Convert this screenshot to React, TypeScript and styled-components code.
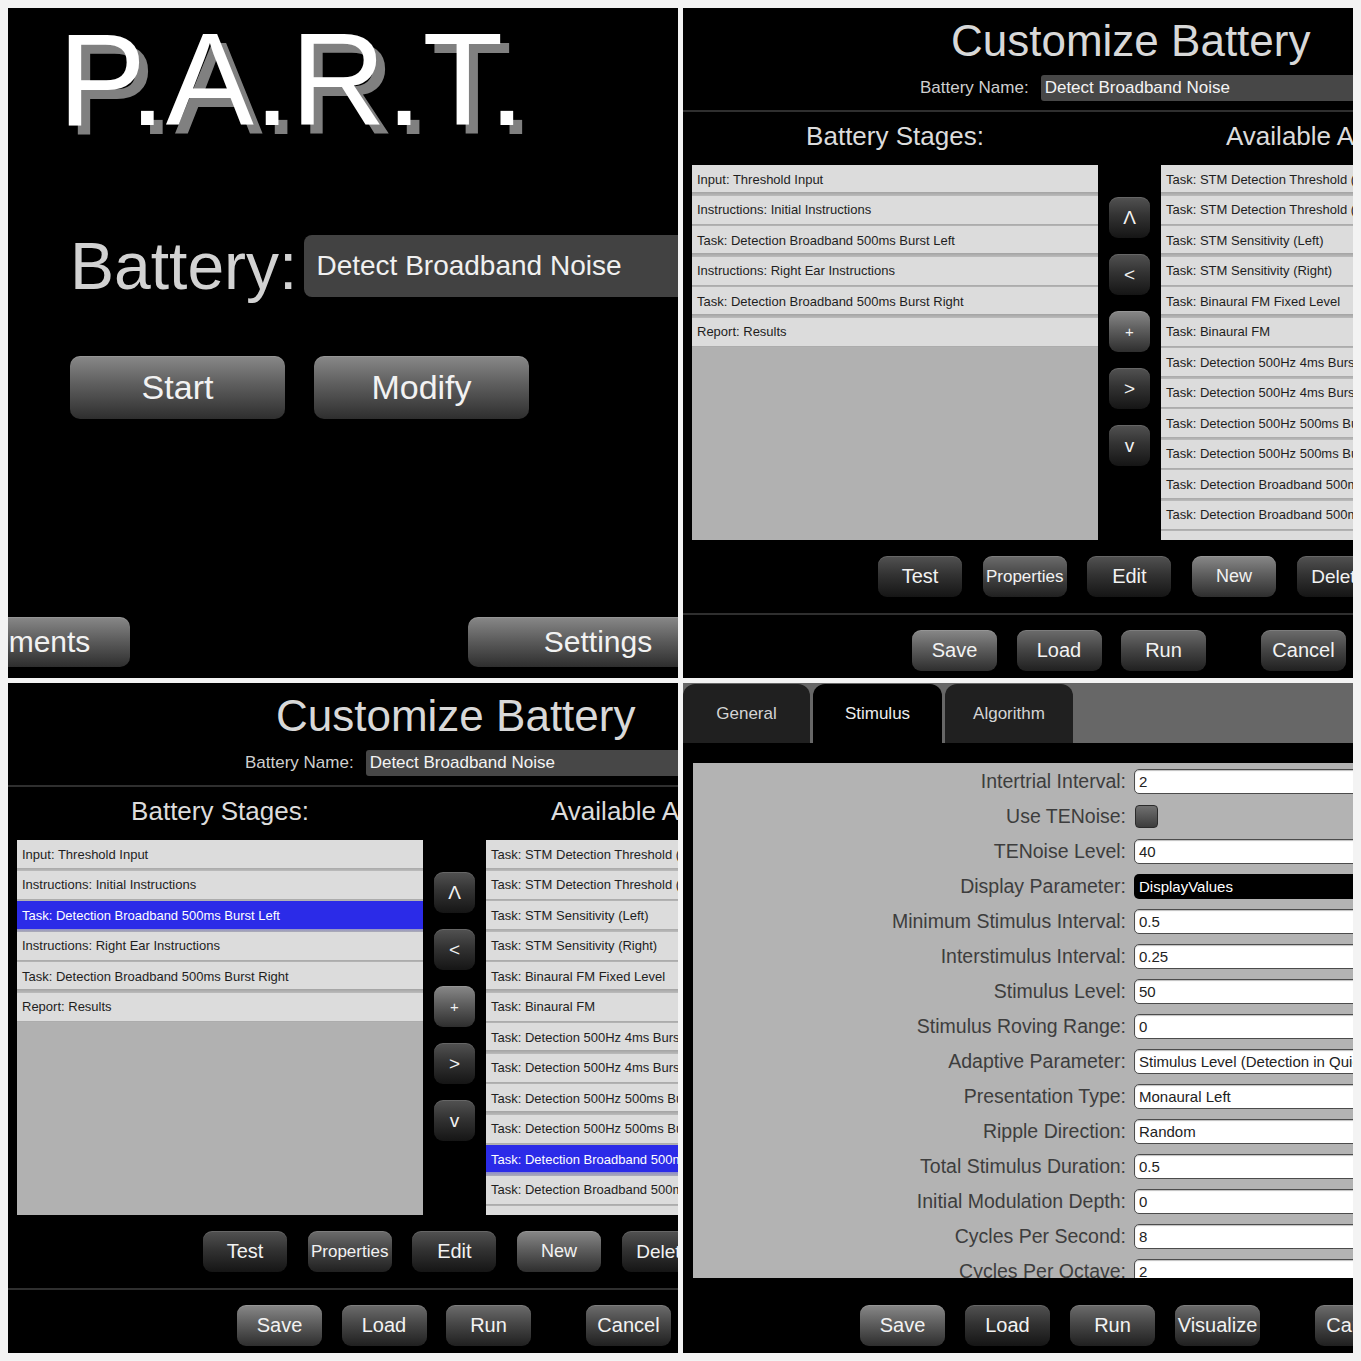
import React from "react";
import styled, { createGlobalStyle } from "styled-components";

const GlobalStyle = createGlobalStyle`
  html, body { margin: 0; padding: 0; background: #f3f3f3; }
  body { font-family: "Liberation Sans", Arial, Helvetica, sans-serif; }
  * { box-sizing: border-box; }
`;

type Tone = "light" | "mid" | "dark";

const toneBg: Record<Tone, string> = {
  light: "linear-gradient(to bottom, #888 0%, #5e5e5e 45%, #2e2e2e 100%)",
  mid: "linear-gradient(to bottom, #6c6c6c 0%, #474747 45%, #202020 100%)",
  dark: "linear-gradient(to bottom, #525252 0%, #333 45%, #151515 100%)",
};

const Collage = styled.main`
  display: grid;
  grid-template-columns: 670px 670px;
  grid-template-rows: 670px 670px;
  gap: 5px;
  padding: 8px;
  width: 1361px;
  height: 1361px;
  background: #f3f3f3;
`;

const Screen = styled.section`
  overflow: hidden;
  background: #000;
  display: flex;
  flex-direction: column;
  min-width: 0;
`;

const GlossButton = styled.button<{ $tone: Tone; $w: number; $h: number; $fs: number; $r: number }>`
  flex: none;
  width: ${(p) => p.$w}px;
  height: ${(p) => p.$h}px;
  border: none;
  border-radius: ${(p) => p.$r}px;
  background: ${(p) => toneBg[p.$tone]};
  box-shadow: inset 0 1px 0 rgba(255, 255, 255, 0.12);
  color: #f2f2f2;
  font-family: inherit;
  font-size: ${(p) => p.$fs}px;
  padding: 0;
  display: flex;
  align-items: center;
  justify-content: center;
  white-space: nowrap;
  overflow: hidden;
`;

/* ---------- Home screen ---------- */

const Logo = styled.h1`
  margin: 1px 0 0 50px;
  padding-right: 12px;
  font-size: 132px;
  line-height: 142px;
  font-weight: normal;
  letter-spacing: 0;
  color: #fff;
  text-shadow: 9px 9px 0 #808080;
  white-space: nowrap;
  align-self: flex-start;
`;

const BatteryRow = styled.div`
  display: flex;
  align-items: center;
  gap: 7px;
  margin: 82px 0 0 62px;
`;

const BatteryLabel = styled.span`
  font-size: 66px;
  line-height: 66px;
  color: #d2d2d2;
  white-space: nowrap;
`;

const BatteryField = styled.div`
  flex: none;
  width: 420px;
  height: 62px;
  border-radius: 8px;
  background: #424242;
  color: #f0f0f0;
  font-size: 28px;
  display: flex;
  align-items: center;
  padding-left: 12px;
  white-space: nowrap;
`;

const HomeButtons = styled.div`
  display: flex;
  gap: 29px;
  margin: 57px 0 0 62px;
`;

const HomeFooter = styled.div`
  margin: auto -50px 11px -124px;
  display: flex;
  justify-content: space-between;
`;

const HomeScreen = () => (
  <Screen>
    <Logo>P.A.R.T.</Logo>
    <BatteryRow>
      <BatteryLabel>Battery:</BatteryLabel>
      <BatteryField>Detect Broadband Noise</BatteryField>
    </BatteryRow>
    <HomeButtons>
      <GlossButton $tone="light" $w={215} $h={63} $fs={34} $r={10}>Start</GlossButton>
      <GlossButton $tone="light" $w={215} $h={63} $fs={34} $r={10}>Modify</GlossButton>
    </HomeButtons>
    <HomeFooter>
      <GlossButton $tone="light" $w={246} $h={50} $fs={30} $r={10}>Experiments</GlossButton>
      <GlossButton $tone="light" $w={260} $h={50} $fs={30} $r={10}>Settings</GlossButton>
    </HomeFooter>
  </Screen>
);

/* ---------- Customize battery screen ---------- */

const Title = styled.h2`
  margin: 11px 0 0 268px;
  font-size: 44px;
  line-height: 44px;
  font-weight: normal;
  color: #d8d8d8;
  white-space: nowrap;
`;

const NameRow = styled.div`
  display: flex;
  align-items: center;
  gap: 12px;
  margin: 12px 0 0 237px;
  height: 26px;
`;

const NameLabel = styled.span`
  font-size: 17px;
  color: #cfcfcf;
  white-space: nowrap;
`;

const NameField = styled.div`
  flex: none;
  width: 420px;
  height: 26px;
  border-radius: 3px;
  background: #474747;
  color: #f4f4f4;
  font-size: 17px;
  padding-left: 4px;
  display: flex;
  align-items: center;
  white-space: nowrap;
`;

const Divider = styled.hr<{ $top: number }>`
  margin: ${(p) => p.$top}px 0 0;
  border: none;
  height: 2px;
  background: #2f2f2f;
  flex: none;
`;

const HeadingRow = styled.div`
  display: flex;
  margin: 9px 0 0 9px;
  height: 30px;
  align-items: center;
`;

const Heading = styled.h3<{ $w: number; $align: "center" | "left" }>`
  margin: 0;
  flex: none;
  width: ${(p) => p.$w}px;
  text-align: ${(p) => p.$align};
  font-size: 26px;
  line-height: 30px;
  font-weight: normal;
  color: #dcdcdc;
  white-space: nowrap;
`;

const ListsRow = styled.div`
  display: flex;
  gap: 11px;
  margin: 14px 0 0 9px;
  height: 375px;
`;

const List = styled.ul<{ $w: number }>`
  list-style: none;
  margin: 0;
  padding: 0;
  flex: none;
  width: ${(p) => p.$w}px;
  height: 375px;
  overflow: hidden;
  background: #b1b1b1;
`;

const ListItem = styled.li<{ $selected?: boolean }>`
  height: 30.5px;
  padding: 1px 0 3px 5px;
  display: flex;
  align-items: center;
  font-size: 13px;
  white-space: nowrap;
  overflow: hidden;
  color: ${(p) => (p.$selected ? "#ffffff" : "#1e1e1e")};
  background: ${(p) =>
    p.$selected
      ? "linear-gradient(to bottom, #2b2be8 0, #2b2be8 27.5px, #8f8fc8 27.5px, #a8a8b8 30.5px)"
      : "linear-gradient(to bottom, #dcdcdc 0, #dcdcdc 27.5px, #a6a6a6 27.5px, #b8b8b8 30.5px)"};
`;

const ArrowColumn = styled.div`
  display: flex;
  flex-direction: column;
  gap: 16px;
  padding-top: 32px;
  flex: none;
`;

const ActionRow = styled.div<{ $top: number; $left: number; $gap: number }>`
  display: flex;
  gap: ${(p) => p.$gap}px;
  margin: ${(p) => p.$top}px 0 0 ${(p) => p.$left}px;
  flex: none;
`;

const Spacer = styled.span<{ $w: number }>`
  flex: none;
  width: ${(p) => p.$w}px;
`;

const stages = [
  "Input: Threshold Input",
  "Instructions: Initial Instructions",
  "Task: Detection Broadband 500ms Burst Left",
  "Instructions: Right Ear Instructions",
  "Task: Detection Broadband 500ms Burst Right",
  "Report: Results",
];

const available = [
  "Task: STM Detection Threshold (Left)",
  "Task: STM Detection Threshold (Right)",
  "Task: STM Sensitivity (Left)",
  "Task: STM Sensitivity (Right)",
  "Task: Binaural FM Fixed Level",
  "Task: Binaural FM",
  "Task: Detection 500Hz 4ms Burst Left",
  "Task: Detection 500Hz 4ms Burst Right",
  "Task: Detection 500Hz 500ms Burst Left",
  "Task: Detection 500Hz 500ms Burst Right",
  "Task: Detection Broadband 500ms Burst Left",
  "Task: Detection Broadband 500ms Burst Right",
  "",
];

const arrows: { label: string; tone: Tone }[] = [
  { label: "\u039B", tone: "dark" },
  { label: "<", tone: "dark" },
  { label: "+", tone: "light" },
  { label: ">", tone: "dark" },
  { label: "v", tone: "dark" },
];

const CustomizeScreen = ({ selStage, selAvail }: { selStage?: number; selAvail?: number }) => (
  <Screen>
    <Title>Customize Battery</Title>
    <NameRow>
      <NameLabel>Battery Name:</NameLabel>
      <NameField>Detect Broadband Noise</NameField>
    </NameRow>
    <Divider $top={9} />
    <HeadingRow>
      <Heading $w={406} $align="center">Battery Stages:</Heading>
      <Spacer $w={128} />
      <Heading $w={300} $align="left">Available Activities:</Heading>
    </HeadingRow>
    <ListsRow>
      <List $w={406}>
        {stages.map((s, i) => (
          <ListItem key={s} $selected={i === selStage}>{s}</ListItem>
        ))}
      </List>
      <ArrowColumn>
        {arrows.map((a) => (
          <GlossButton key={a.label} $tone={a.tone} $w={41} $h={41} $fs={a.label === "+" ? 15 : 19} $r={9}>
            {a.label}
          </GlossButton>
        ))}
      </ArrowColumn>
      <List $w={400}>
        {available.map((s, i) => (
          <ListItem key={i} $selected={i === selAvail}>{s}</ListItem>
        ))}
      </List>
    </ListsRow>
    <ActionRow $top={16} $left={195} $gap={20.7}>
      <GlossButton $tone="dark" $w={84} $h={41} $fs={20} $r={9}>Test</GlossButton>
      <GlossButton $tone="mid" $w={84} $h={41} $fs={17} $r={9}>Properties</GlossButton>
      <GlossButton $tone="dark" $w={84} $h={41} $fs={20} $r={9}>Edit</GlossButton>
      <GlossButton $tone="light" $w={84} $h={41} $fs={18} $r={9}>New</GlossButton>
      <GlossButton $tone="dark" $w={84} $h={41} $fs={19} $r={9}>Delete</GlossButton>
    </ActionRow>
    <Divider $top={16} />
    <ActionRow $top={15} $left={229} $gap={19.5}>
      <GlossButton $tone="light" $w={85} $h={41} $fs={20} $r={9}>Save</GlossButton>
      <GlossButton $tone="mid" $w={85} $h={41} $fs={20} $r={9}>Load</GlossButton>
      <GlossButton $tone="mid" $w={85} $h={41} $fs={20} $r={9}>Run</GlossButton>
      <Spacer $w={16} />
      <GlossButton $tone="mid" $w={85} $h={41} $fs={20} $r={9}>Cancel</GlossButton>
    </ActionRow>
  </Screen>
);

/* ---------- Stimulus properties screen ---------- */

const TabBar = styled.nav`
  display: flex;
  gap: 3px;
  height: 60px;
  padding-top: 1px;
  background: #676767;
  flex: none;
`;

const Tab = styled.div<{ $active?: boolean; $w: number }>`
  flex: none;
  width: ${(p) => p.$w}px;
  border-radius: 12px 12px 0 0;
  background: ${(p) => (p.$active ? "#000" : "#202020")};
  color: ${(p) => (p.$active ? "#ececec" : "#d4d4d4")};
  font-size: 17px;
  display: flex;
  align-items: center;
  justify-content: center;
`;

const FormArea = styled.div`
  flex: none;
  margin: 20px 0 0 10px;
  width: 700px;
  height: 515px;
  overflow: hidden;
  background: #b3b3b3;
  padding-top: 1px;
`;

const FormRow = styled.div`
  display: grid;
  grid-template-columns: 433px 300px;
  column-gap: 8px;
  height: 35px;
  align-items: center;
`;

const FormLabel = styled.label`
  text-align: right;
  font-size: 19.5px;
  color: #3d3d3d;
  white-space: nowrap;
`;

const ValueBox = styled.div<{ $dark?: boolean }>`
  height: 25px;
  border: ${(p) => (p.$dark ? "none" : "1px solid #4c4c4c")};
  border-radius: 5px;
  background: ${(p) => (p.$dark ? "#000" : "#fff")};
  box-shadow: ${(p) => (p.$dark ? "none" : "inset 0 1px 1px rgba(0,0,0,0.25)")};
  color: ${(p) => (p.$dark ? "#fff" : "#222")};
  font-size: 15px;
  padding-left: ${(p) => (p.$dark ? 5 : 4)}px;
  display: flex;
  align-items: center;
  white-space: nowrap;
  overflow: hidden;
`;

const CheckBox = styled.div`
  width: 23px;
  height: 23px;
  margin-left: 1px;
  border: 1px solid #2a2a2a;
  border-radius: 4px;
  background: linear-gradient(to bottom, #707070, #3c3c3c);
`;

type Field = { label: string; value?: string; kind?: "check" | "dark" };

const fields: Field[] = [
  { label: "Intertrial Interval:", value: "2" },
  { label: "Use TENoise:", kind: "check" },
  { label: "TENoise Level:", value: "40" },
  { label: "Display Parameter:", value: "DisplayValues", kind: "dark" },
  { label: "Minimum Stimulus Interval:", value: "0.5" },
  { label: "Interstimulus Interval:", value: "0.25" },
  { label: "Stimulus Level:", value: "50" },
  { label: "Stimulus Roving Range:", value: "0" },
  { label: "Adaptive Parameter:", value: "Stimulus Level (Detection in Quiet)" },
  { label: "Presentation Type:", value: "Monaural Left" },
  { label: "Ripple Direction:", value: "Random" },
  { label: "Total Stimulus Duration:", value: "0.5" },
  { label: "Initial Modulation Depth:", value: "0" },
  { label: "Cycles Per Second:", value: "8" },
  { label: "Cycles Per Octave:", value: "2" },
];

const StimulusScreen = () => (
  <Screen>
    <TabBar>
      <Tab $w={127}>General</Tab>
      <Tab $w={129} $active>Stimulus</Tab>
      <Tab $w={128}>Algorithm</Tab>
    </TabBar>
    <FormArea>
      {fields.map((f) => (
        <FormRow key={f.label}>
          <FormLabel>{f.label}</FormLabel>
          {f.kind === "check" ? (
            <CheckBox />
          ) : (
            <ValueBox $dark={f.kind === "dark"}>{f.value}</ValueBox>
          )}
        </FormRow>
      ))}
    </FormArea>
    <ActionRow $top={27} $left={177} $gap={20}>
      <GlossButton $tone="light" $w={85} $h={41} $fs={20} $r={9}>Save</GlossButton>
      <GlossButton $tone="dark" $w={85} $h={41} $fs={20} $r={9}>Load</GlossButton>
      <GlossButton $tone="mid" $w={85} $h={41} $fs={20} $r={9}>Run</GlossButton>
      <GlossButton $tone="mid" $w={85} $h={41} $fs={20} $r={9}>Visualize</GlossButton>
      <Spacer $w={15} />
      <GlossButton $tone="mid" $w={85} $h={41} $fs={20} $r={9}>Cancel</GlossButton>
    </ActionRow>
  </Screen>
);

export default function App() {
  return (
    <>
      <GlobalStyle />
      <Collage>
        <HomeScreen />
        <CustomizeScreen />
        <CustomizeScreen selStage={2} selAvail={10} />
        <StimulusScreen />
      </Collage>
    </>
  );
}
